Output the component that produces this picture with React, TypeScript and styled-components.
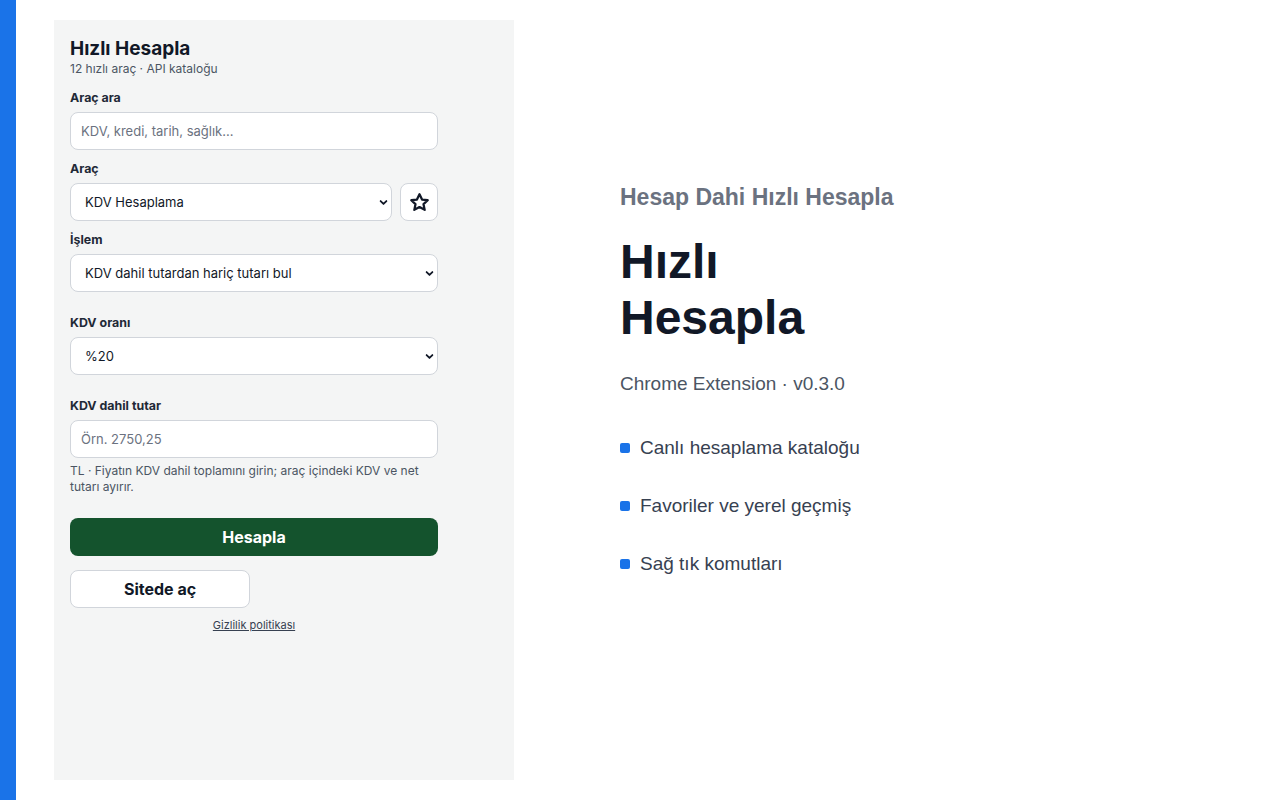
import React from "react";
import styled, { createGlobalStyle } from "styled-components";

const GlobalStyle = createGlobalStyle`
  html, body {
    margin: 0;
    padding: 0;
    background: #ffffff;
  }
  * {
    box-sizing: border-box;
  }
`;

const Page = styled.div`
  display: flex;
  height: 800px;
  width: 1280px;
`;

const SideBar = styled.div`
  width: 16px;
  flex-shrink: 0;
  background: #1a73e8;
`;

const Stage = styled.div`
  flex: 1;
  display: flex;
  padding: 20px 0 20px 38px;
`;

const Popup = styled.div`
  width: 460px;
  background: #f4f5f5;
  padding: 16px;
  font-family: Inter, "Noto Sans", sans-serif;
  color: #111827;
  display: flex;
  flex-direction: column;
`;

const Title = styled.h1`
  margin: 1px 0 0;
  font-size: 19px;
  line-height: 24px;
  font-weight: 700;
  color: #111827;
`;

const Subtitle = styled.div`
  font-size: 12px;
  line-height: 16px;
  color: #4b5563;
  margin-bottom: 13px;
`;

const Field = styled.div<{ $gap?: number }>`
  display: flex;
  flex-direction: column;
  gap: 6px;
  margin-top: ${(p) => p.$gap ?? 12}px;
`;

const Label = styled.label`
  font-size: 12.4px;
  line-height: 16px;
  font-weight: 700;
  color: #1f2937;
`;

const TextInput = styled.input`
  width: 368px;
  height: 38px;
  border: 1px solid #d1d5db;
  border-radius: 8px;
  background: #ffffff;
  padding: 0 10px;
  font-family: inherit;
  font-size: 13px;
  color: #111827;
  outline: none;
  &::placeholder {
    color: #6b7280;
  }
`;

const Row = styled.div`
  display: flex;
  gap: 8px;
`;

const SelectWrap = styled.div<{ $width: number }>`
  position: relative;
  width: ${(p) => p.$width}px;
  height: 38px;
`;

const Select = styled.select`
  appearance: none;
  -webkit-appearance: none;
  width: 100%;
  height: 100%;
  border: 1px solid #d1d5db;
  border-radius: 8px;
  background: #ffffff;
  padding: 0 28px 0 14px;
  font-family: inherit;
  font-size: 13px;
  color: #111827;
  outline: none;
`;

const Chevron = styled.svg`
  position: absolute;
  right: 4px;
  top: 50%;
  width: 9px;
  height: 9px;
  margin-top: -4px;
  pointer-events: none;
`;

const IconButton = styled.button`
  width: 38px;
  height: 38px;
  border: 1px solid #d1d5db;
  border-radius: 8px;
  background: #ffffff;
  display: flex;
  align-items: center;
  justify-content: center;
  padding: 0;
`;

const Help = styled.div`
  font-size: 12px;
  line-height: 16px;
  color: #4b5563;
  width: 368px;
  margin-top: -1px;
`;

const PrimaryButton = styled.button`
  margin-top: 23px;
  width: 368px;
  height: 38px;
  border: none;
  border-radius: 8px;
  background: #14532d;
  color: #ffffff;
  font-family: inherit;
  font-size: 16px;
  font-weight: 700;
`;

const SecondaryButton = styled.button`
  margin-top: 14px;
  width: 180px;
  height: 38px;
  border: 1px solid #d1d5db;
  border-radius: 8px;
  background: #ffffff;
  color: #111827;
  font-family: inherit;
  font-size: 16px;
  font-weight: 700;
`;

const FooterLink = styled.a`
  align-self: flex-start;
  width: 368px;
  text-align: center;
  margin-top: 10px;
  font-size: 11px;
  line-height: 14px;
  color: #374151;
  text-decoration: underline;
`;

const Hero = styled.div`
  display: flex;
  flex-direction: column;
  padding: 164px 0 0 106px;
  font-family: "Liberation Sans", Arial, sans-serif;
`;

const Eyebrow = styled.div`
  font-size: 23px;
  line-height: 26px;
  font-weight: 700;
  color: #6b7280;
`;

const HeroTitle = styled.h2`
  margin: 24px 0 0;
  font-size: 48px;
  line-height: 56px;
  font-weight: 700;
  color: #111827;
`;

const Version = styled.div`
  margin-top: 27px;
  font-size: 19px;
  line-height: 22px;
  color: #4b5563;
`;

const Features = styled.ul`
  list-style: none;
  margin: 42px 0 0;
  padding: 0;
  display: flex;
  flex-direction: column;
  gap: 36px;
`;

const Feature = styled.li`
  display: flex;
  align-items: center;
  gap: 10px;
  font-size: 19px;
  line-height: 22px;
  color: #374151;
`;

const Dot = styled.span`
  width: 10px;
  height: 10px;
  border-radius: 2px;
  background: #1a73e8;
  flex-shrink: 0;
`;

const ChevronIcon = () => (
  <Chevron viewBox="0 0 10 10">
    <path d="M1.8 3.4 L5 6.6 L8.2 3.4" fill="none" stroke="#111827" strokeWidth="2" strokeLinecap="round" strokeLinejoin="round" />
  </Chevron>
);

const SelectBox: React.FC<{ width: number; value: string }> = ({ width, value }) => (
  <SelectWrap $width={width}>
    <Select defaultValue={value}>
      <option>{value}</option>
    </Select>
    <ChevronIcon />
  </SelectWrap>
);

const features = ["Canlı hesaplama kataloğu", "Favoriler ve yerel geçmiş", "Sağ tık komutları"];

export default function App() {
  return (
    <>
      <GlobalStyle />
      <Page>
        <SideBar />
        <Stage>
          <Popup>
            <Title>Hızlı Hesapla</Title>
            <Subtitle>12 hızlı araç · API kataloğu</Subtitle>

            <Field $gap={0}>
              <Label>Araç ara</Label>
              <TextInput placeholder="KDV, kredi, tarih, sağlık..." />
            </Field>

            <Field $gap={11}>
              <Label>Araç</Label>
              <Row>
                <SelectBox width={322} value="KDV Hesaplama" />
                <IconButton aria-label="Favori">
                  <svg width="21" height="21" viewBox="0 0 24 24" fill="none" stroke="#111827" strokeWidth="2.6" strokeLinejoin="round">
                    <path d="M12 2.6l2.9 6 6.5.8-4.8 4.5 1.3 6.5L12 17.2l-5.9 3.2 1.3-6.5-4.8-4.5 6.5-.8z" />
                  </svg>
                </IconButton>
              </Row>
            </Field>

            <Field $gap={11}>
              <Label>İşlem</Label>
              <SelectBox width={368} value="KDV dahil tutardan hariç tutarı bul" />
            </Field>

            <Field $gap={23}>
              <Label>KDV oranı</Label>
              <SelectBox width={368} value="%20" />
            </Field>

            <Field $gap={23}>
              <Label>KDV dahil tutar</Label>
              <TextInput placeholder="Örn. 2750,25" />
              <Help>TL · Fiyatın KDV dahil toplamını girin; araç içindeki KDV ve net tutarı ayırır.</Help>
            </Field>

            <PrimaryButton>Hesapla</PrimaryButton>
            <SecondaryButton>Sitede aç</SecondaryButton>
            <FooterLink href="#">Gizlilik politikası</FooterLink>
          </Popup>

          <Hero>
            <Eyebrow>Hesap Dahi Hızlı Hesapla</Eyebrow>
            <HeroTitle>
              Hızlı
              <br />
              Hesapla
            </HeroTitle>
            <Version>Chrome Extension · v0.3.0</Version>
            <Features>
              {features.map((f) => (
                <Feature key={f}>
                  <Dot />
                  {f}
                </Feature>
              ))}
            </Features>
          </Hero>
        </Stage>
      </Page>
    </>
  );
}
